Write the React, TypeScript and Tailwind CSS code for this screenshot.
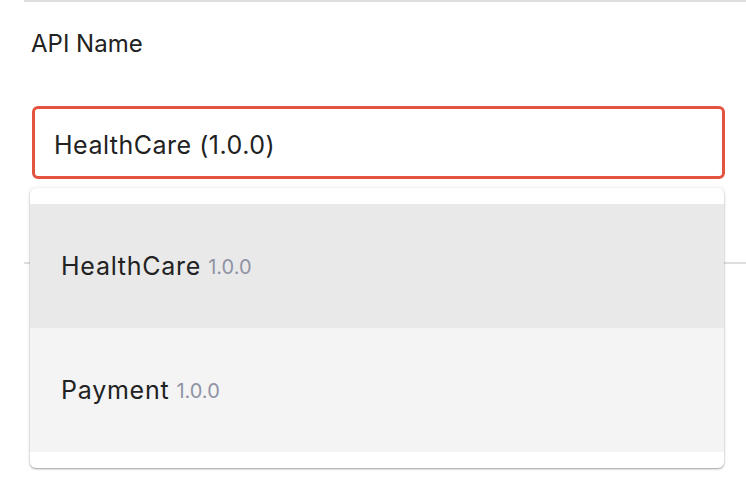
const options = [
  { name: "HealthCare", version: "1.0.0", active: true },
  { name: "Payment", version: "1.0.0", active: false },
];

const App = () => {
  return (
    <div className="min-h-screen bg-white font-['Inter',sans-serif] text-[#222222]">
      <div className="pl-6">
        <div className="h-[2px] bg-[#dedede]" />

        <div className="pl-2 pr-[21px]">
          <label className="mt-[30px] ml-[-1px] block text-[24px] leading-[24px]">
            API Name
          </label>

          <div className="relative mt-[50px]">
            <div className="flex h-[73px] items-center rounded-[6px] border-[3px] border-[#e4533f] pl-[19px] pt-[6px] text-[25px] leading-none tracking-[0.02em]">
              HealthCare (1.0.0)
            </div>

            <div className="absolute left-[-2px] top-[82px] z-10 w-[694px] rounded-[6px] bg-white py-4 shadow-[0_1px_2px_rgba(0,0,0,0.35),0_0_5px_rgba(0,0,0,0.08)]">
              {options.map((opt) => (
                <div
                  key={opt.name}
                  className={`flex h-[124px] items-center gap-[7px] pl-[31px] text-[25px] leading-none ${
                    opt.active ? "bg-[#e9e9e9]" : "bg-[#f4f4f4]"
                  }`}
                >
                  <span className="tracking-[0.03em]">{opt.name}</span>
                  <span className="pt-[2px] text-[20px] text-[#8f93a4]">
                    {opt.version}
                  </span>
                </div>
              ))}
            </div>
          </div>
        </div>

        <div className="mt-[83px] h-[2px] bg-[#dedede]" />
      </div>
    </div>
  );
};

export default App;
